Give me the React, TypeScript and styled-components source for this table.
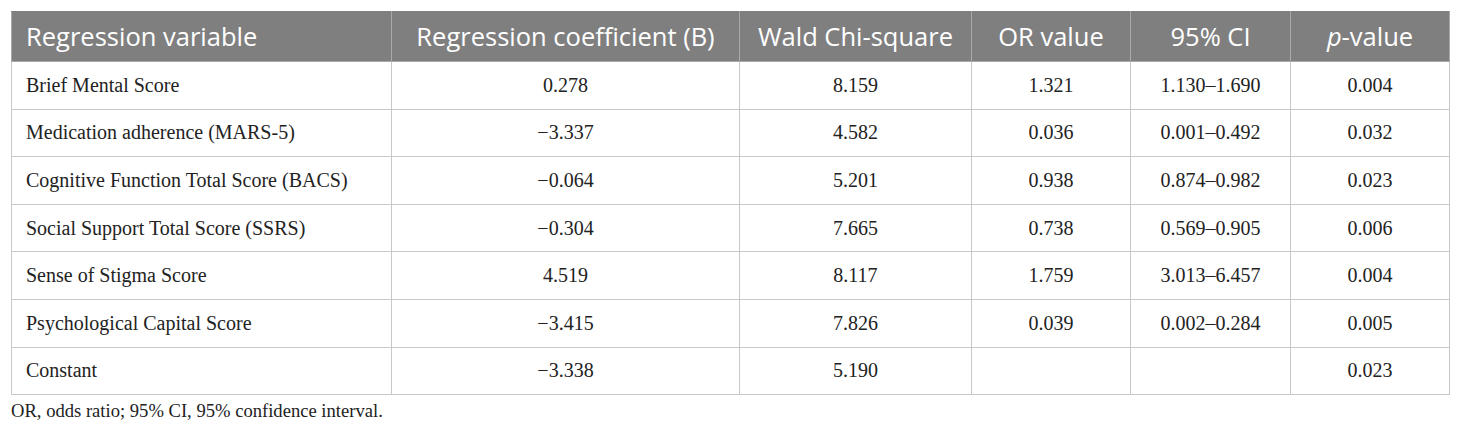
import styled, { createGlobalStyle } from 'styled-components'

const GlobalStyle = createGlobalStyle`
  html, body {
    margin: 0;
    padding: 0;
    background: #fff;
  }
`

const rows: string[][] = [
  ['Brief Mental Score', '0.278', '8.159', '1.321', '1.130–1.690', '0.004'],
  ['Medication adherence (MARS-5)', '−3.337', '4.582', '0.036', '0.001–0.492', '0.032'],
  ['Cognitive Function Total Score (BACS)', '−0.064', '5.201', '0.938', '0.874–0.982', '0.023'],
  ['Social Support Total Score (SSRS)', '−0.304', '7.665', '0.738', '0.569–0.905', '0.006'],
  ['Sense of Stigma Score', '4.519', '8.117', '1.759', '3.013–6.457', '0.004'],
  ['Psychological Capital Score', '−3.415', '7.826', '0.039', '0.002–0.284', '0.005'],
  ['Constant', '−3.338', '5.190', '', '', '0.023'],
]

const colWidths = [380, 348, 232, 159, 160, 159]

const App = () => {
  return (
    <Page>
      <GlobalStyle />
      <Table>
        <colgroup>
          {colWidths.map((w, i) => (
            <col key={i} style={{ width: w }} />
          ))}
        </colgroup>
        <thead>
          <tr>
            <HeadCell>Regression variable</HeadCell>
            <HeadCell center>Regression coefficient (B)</HeadCell>
            <HeadCell center>Wald Chi-square</HeadCell>
            <HeadCell center>OR value</HeadCell>
            <HeadCell center>95% CI</HeadCell>
            <HeadCell center>
              <em>p</em>-value
            </HeadCell>
          </tr>
        </thead>
        <tbody>
          {rows.map((r) => (
            <tr key={r[0]}>
              {r.map((c, i) => (
                <Cell key={i} center={i > 0}>
                  {c}
                </Cell>
              ))}
            </tr>
          ))}
        </tbody>
      </Table>
      <Caption>OR, odds ratio; 95% CI, 95% confidence interval.</Caption>
    </Page>
  )
}

const Page = styled.div`
  padding: 11px 11px 0 11px;
  width: 1438px;
`

const Table = styled.table`
  width: 1438px;
  border-collapse: collapse;
  table-layout: fixed;
`

const HeadCell = styled.th<{ center?: boolean }>`
  height: 50px;
  padding: 0 0 1px 0;
  padding-left: ${(p) => (p.center ? '0' : '14px')};
  background: #7f7f7f;
  color: #fff;
  font-family: 'Open Sans', 'Noto Sans', sans-serif;
  font-size: 25.5px;
  font-weight: 400;
  text-align: ${(p) => (p.center ? 'center' : 'left')};
  border: 1px solid #a9a9a9;
  border-top-color: #7f7f7f;
  box-sizing: border-box;
  em {
    font-style: italic;
  }
`

const Cell = styled.td<{ center?: boolean }>`
  height: 47.6px;
  padding: 0 0 0 ${(p) => (p.center ? '0' : '14px')};
  font-family: 'Liberation Serif', 'Times New Roman', serif;
  font-size: 20px;
  color: #222;
  text-align: ${(p) => (p.center ? 'center' : 'left')};
  border: 1px solid #c8c8c8;
  box-sizing: border-box;
`

const Caption = styled.div`
  margin-top: 5px;
  font-family: 'Liberation Serif', 'Times New Roman', serif;
  font-size: 18.6px;
  color: #222;
`

export default App
